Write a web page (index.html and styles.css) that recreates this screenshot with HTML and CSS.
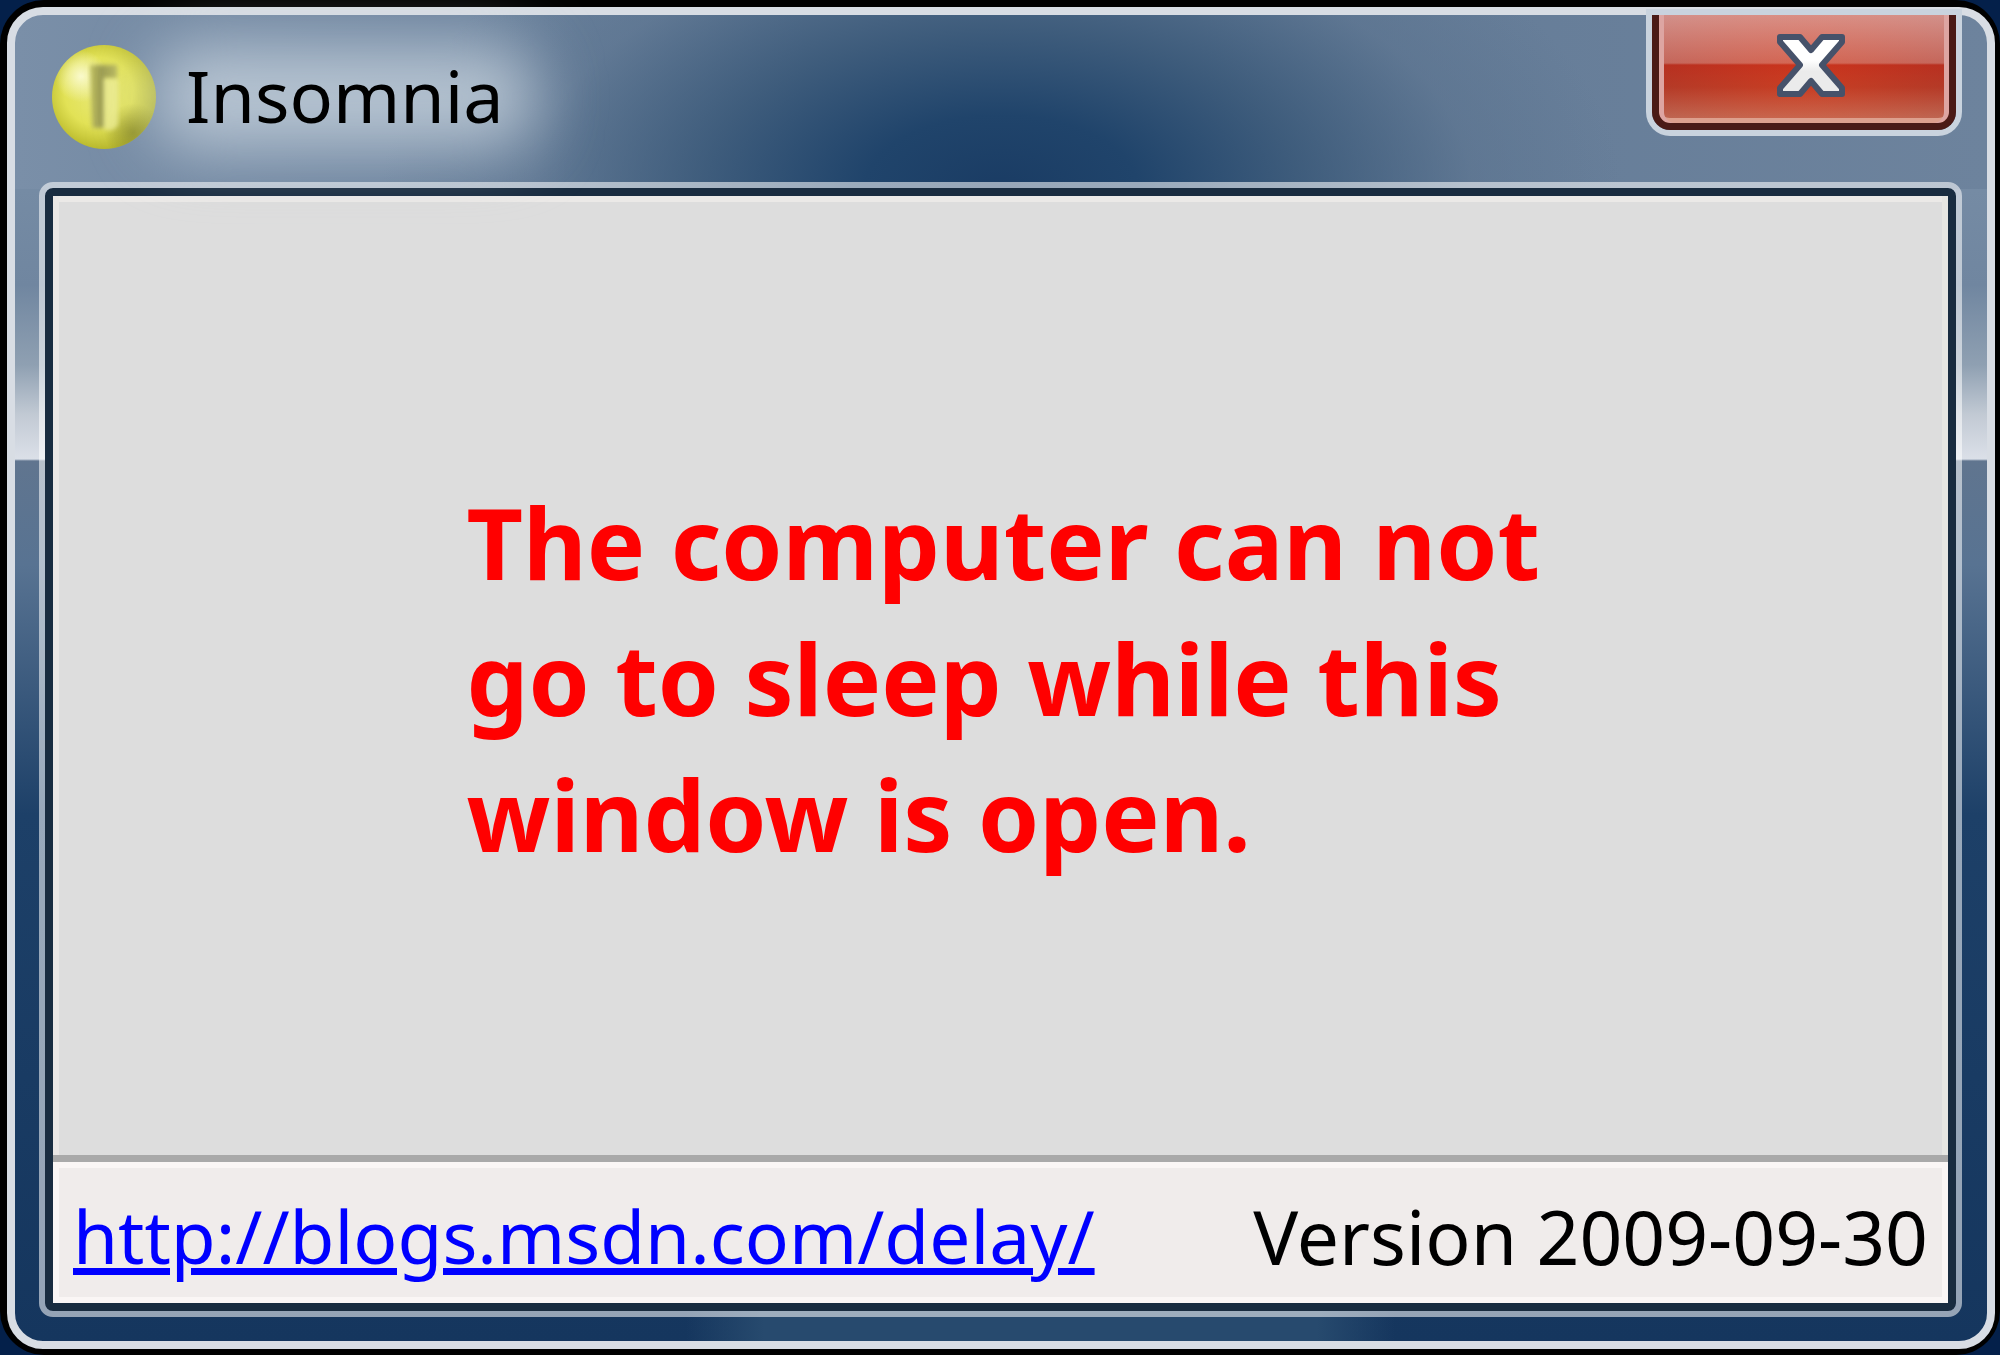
FILE: index.html
```
<!DOCTYPE html>
<html lang="en">

<head>
    <meta charset="UTF-8">
    <meta name="viewport" content="width=device-width, initial-scale=1.0">
    <title>Insomnia</title>
    <link rel="stylesheet" href="styles.css">
</head>

<body>
    <div class="frame">
        <div class="window">
            <header class="titlebar">
                <svg class="app-icon" viewBox="0 0 104 104" aria-hidden="true">
                    <defs>
                        <radialGradient id="pill" cx="0.45" cy="0.45" r="0.55">
                            <stop offset="0" stop-color="#e8e878" />
                            <stop offset="0.6" stop-color="#e2e256" />
                            <stop offset="0.8" stop-color="#cece40" />
                            <stop offset="1" stop-color="#b8b82c" />
                        </radialGradient>
                        <radialGradient id="shine" cx="0.28" cy="0.3" r="0.25">
                            <stop offset="0" stop-color="#fafacc" />
                            <stop offset="1" stop-color="#fafacc" stop-opacity="0" />
                        </radialGradient>
                        <radialGradient id="shade" cx="0.78" cy="0.84" r="0.28">
                            <stop offset="0" stop-color="#80801e" stop-opacity="0.7" />
                            <stop offset="1" stop-color="#80801e" stop-opacity="0" />
                        </radialGradient>
                        <linearGradient id="slot" x1="0" y1="0" x2="1" y2="0">
                            <stop offset="0" stop-color="#c2c260" />
                            <stop offset="0.4" stop-color="#9a9a50" />
                            <stop offset="1" stop-color="#b8b85c" />
                        </linearGradient>
                        <filter id="soft">
                            <feGaussianBlur stdDeviation="2" />
                        </filter>
                    </defs>
                    <circle cx="52" cy="52" r="52" fill="url(#pill)" />
                    <circle cx="52" cy="52" r="52" fill="url(#shine)" />
                    <circle cx="52" cy="52" r="52" fill="url(#shade)" />
                    <g filter="url(#soft)">
                        <path d="M52 34h14v46q-6 8-14 4z" fill="#ecec90" opacity="0.8" />
                        <path d="M38 20h27v13H52v50H40z" fill="url(#slot)" />
                    </g>
                </svg>
                <h1 class="title">Insomnia</h1>
                <button class="close" type="button" aria-label="Close">
                    <svg viewBox="0 0 72 66" aria-hidden="true">
                        <defs>
                            <linearGradient id="cross" x1="0" y1="0" x2="0" y2="1">
                                <stop offset="0.4" stop-color="#fff" />
                                <stop offset="0.6" stop-color="#ebebeb" />
                            </linearGradient>
                        </defs>
                        <path d="M5 4h20l11 13L47 4h20v5L47 32l20 23v6H47L36 48 25 61H5v-6l20-23L5 9z" fill="url(#cross)"
                            stroke="#46526a" stroke-width="6" stroke-linejoin="round" />
                    </svg>
                </button>
            </header>
            <div class="client">
                <main class="content">
                    <p class="message">The computer can not go to sleep while this window is open.</p>
                </main>
                <footer class="status">
                    <a href="http://blogs.msdn.com/delay/">http://blogs.msdn.com/delay/</a>
                    <span class="version">Version 2009-09-30</span>
                </footer>
            </div>
        </div>
    </div>
</body>

</html>
```
FILE: styles.css
```
* {
    box-sizing: border-box;
}

body {
    margin: 0;
    background: #04204a;
    font-family: "Noto Sans", "Open Sans", sans-serif;
    color: #000;
}

.frame {
    display: flex;
    min-height: 100vh;
    padding: 7px 5px 6px 7px;
    border-radius: 44px;
    background: #000;
}

/* glass: title bar glow, bottom edge, then the side borders */
.window {
    flex: 1;
    display: flex;
    flex-direction: column;
    padding: 0 31px 30px 30px;
    border: 8px solid #d8dde4;
    border-radius: 36px;
    background:
        radial-gradient(ellipse 620px 330px at 50% 173px, #1a3c64 0%, #20446b 22%, rgba(50, 82, 115, 0.75) 48%, rgba(85, 110, 138, 0.4) 76%, rgba(100, 122, 150, 0) 100%) 0 0 / 100% 174px no-repeat,
        linear-gradient(90deg, #7a8fa8, #627a96 40%, #627a96 60%, #6d839d) 0 0 / 100% 174px no-repeat,
        linear-gradient(90deg, transparent 34%, #274a6e 38%, #274a6e 66%, transparent 70%) 0 100% / 100% 30px no-repeat,
        linear-gradient(#758ba4 174px, #7086a0 270px, #8fa0b2 350px, #c2cad4 400px, #dbe0e8 444px, #60758f 446px, #587392 550px, #1d4068 800px, #15365e);
}

.titlebar {
    display: flex;
    align-items: center;
    height: 173px;
    padding: 0 0 9px 7px;
}

.app-icon {
    width: 104px;
    height: 104px;
}

.title {
    position: relative;
    z-index: 0;
    margin: 0 auto 0 30px;
    font-size: 72px;
    font-weight: normal;
    line-height: 100px;
    padding-bottom: 4px;
}

.title::before {
    content: "";
    position: absolute;
    inset: 0 -32px;
    z-index: -1;
    border-radius: 40px;
    background: rgba(206, 216, 226, 0.75);
    filter: blur(32px);
}

.close {
    align-self: flex-start;
    display: flex;
    align-items: center;
    justify-content: center;
    width: 304px;
    height: 115px;
    padding: 0 0 6px 14px;
    border: 7px solid #4a1a16;
    border-top: 0;
    border-radius: 0 0 18px 18px;
    background:
        radial-gradient(ellipse at 50% 60%, rgba(235, 70, 30, 0.35), rgba(130, 50, 50, 0.25)),
        linear-gradient(#ecb0a8, #cf786e 48px, #bd2c1c 50px, #b83a26 72px, #cc8068);
    box-shadow: 0 0 0 6px #c9d3de, inset 5px 0 #dda5a2, inset -5px 0 #dda5a2, inset 0 -5px #dda08e;
    cursor: pointer;
}

.close svg {
    width: 72px;
    height: 66px;
}

.client {
    flex: 1;
    display: flex;
    flex-direction: column;
    border: 8px solid #192c40;
    border-radius: 8px;
    outline: 6px solid rgba(255, 255, 255, 0.55);
    background: #f0eceb;
}

.content {
    flex: 1;
    display: flex;
    align-items: center;
    justify-content: center;
    padding: 4px 0 0 12px;
    border-bottom: 7px solid #a9a9a9;
    background: #ddd;
    box-shadow: inset 6px 0 #eae7e5, inset -6px 0 #e6e6e2, inset 0 6px #ebe9e7;
}

.message {
    width: 1080px;
    margin: 0;
    font-size: 98px;
    font-weight: bold;
    line-height: 136px;
    color: #f00;
}

.status {
    display: flex;
    align-items: center;
    justify-content: space-between;
    padding: 24px 20px 17px;
    font-size: 73px;
    line-height: 100px;
    white-space: nowrap;
    box-shadow: inset 0 0 0 6px #faf6f5;
}

.status a {
    color: #00f;
}

.version {
    font-size: 75px;
}
```
